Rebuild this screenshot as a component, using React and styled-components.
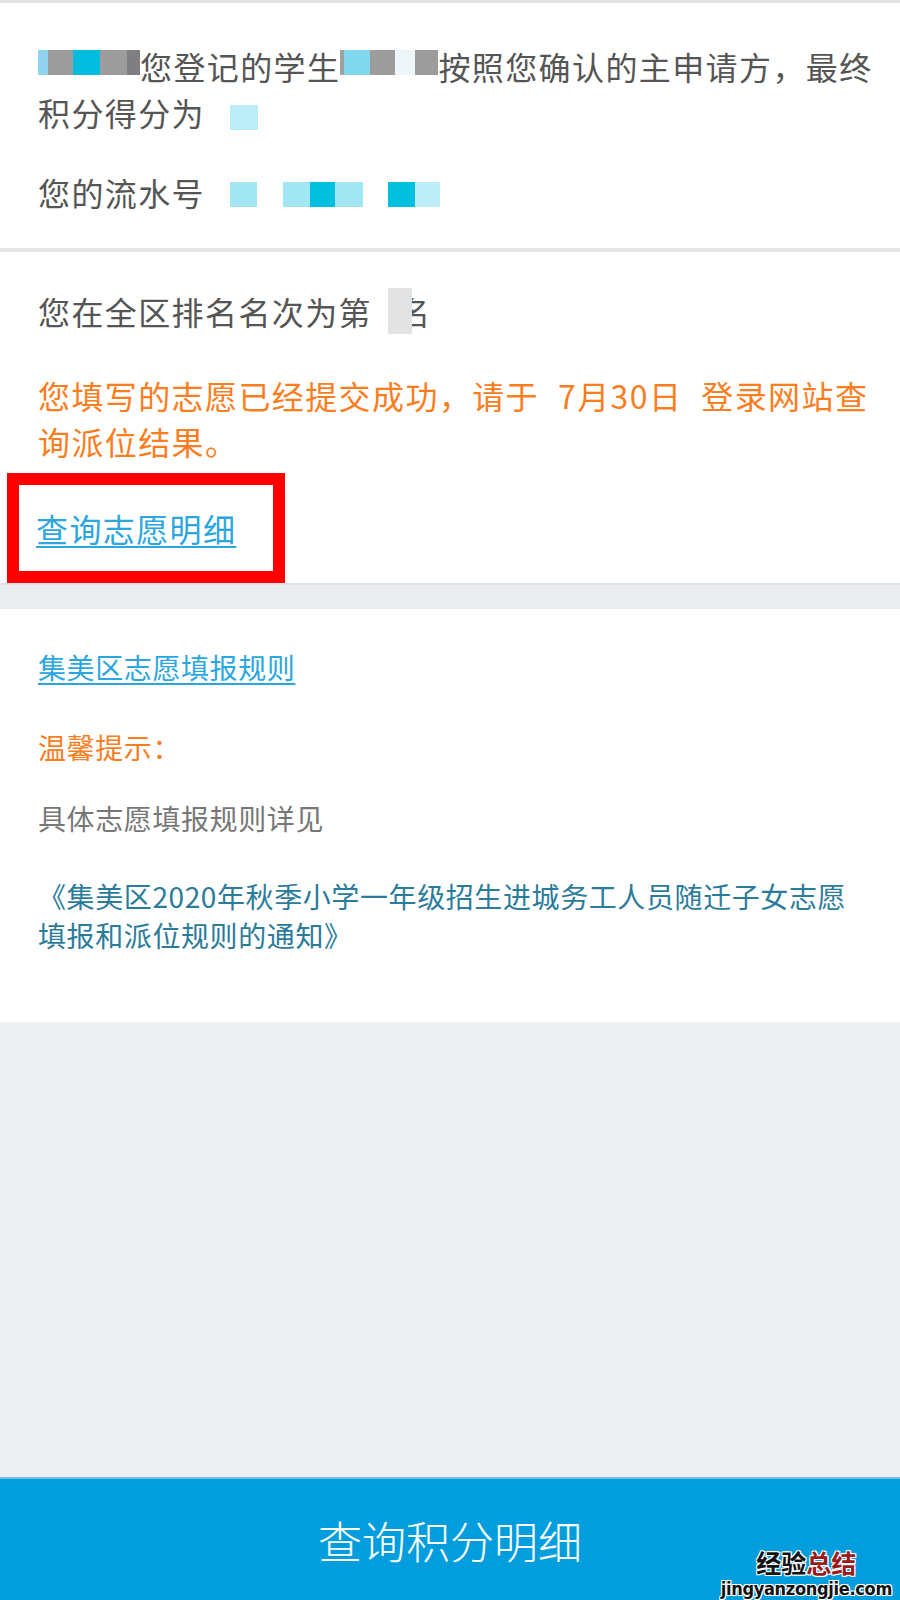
import React from 'react';
import styled, { createGlobalStyle } from 'styled-components';

const GlobalStyle = createGlobalStyle`
    html, body {
        margin : 0;
        padding : 0;
        background : #eeeff3;
        font-family : "Noto Sans CJK SC", "Liberation Sans", sans-serif;
    }
`;

const Page = styled.div`
    min-height : 100vh;
    display : flex;
    flex-direction : column;
    border-top : 3px solid #e2e2e2;
    box-sizing : border-box;
`;

const Section = styled.section`
    background : #ffffff;
    padding : ${(p) => p.$pad};
    border-bottom : ${(p) => (p.$divider ? '4px solid #e5e5e5' : 'none')};
`;

const Para = styled.p`
    margin : ${(p) => p.$mt || 0} 0 0 0;
    font-size : 32px;
    letter-spacing : 1.4px;
    line-height : 46px;
    color : ${(p) => p.$color || '#555555'};
`;

const SmallPara = styled.p`
    margin : ${(p) => p.$mt || 0} 0 0 0;
    font-size : 28px;
    letter-spacing : 0.6px;
    line-height : 39px;
    color : ${(p) => p.$color || '#777777'};
`;

const Tile = styled.span`
    display : inline-block;
    width : ${(p) => p.$w}px;
    height : ${(p) => p.$h || 25}px;
    background : ${(p) => p.$c || 'transparent'};
    vertical-align : ${(p) => p.$va || '5px'};
    letter-spacing : 0;
`;

const Cover = styled(Tile)`
    position : relative;
    z-index : 1;
`;

const Hidden = styled.span`
    margin-left : -14px;
`;

const DateSpan = styled.span`
    margin : 0 19px;
`;

const Mark = styled.div`
    margin : 9px 0 0 -31px;
    width : 237px;
    border : 12px solid #ff0000;
    padding : 20px 0 20px 17px;
`;

const Link = styled.a`
    color : ${(p) => p.$color || '#2ba6df'};
    text-decoration : underline;
    text-decoration-thickness : 2px;
    text-underline-offset : 4px;
    cursor : pointer;
`;

const Band = styled.div`
    height : 24px;
    background : #ebecee;
    border-top : 2px solid #e1e2e4;
`;

const Spacer = styled.div`
    flex : 1;
`;

const BottomBar = styled.button`
    position : relative;
    height : 123px;
    border : none;
    border-top : 2px solid #74bde2;
    background : #019ddd;
    color : #ffffff;
    font-family : "Noto Sans CJK SC", sans-serif;
    font-size : 44px;
    font-weight : 300;
    letter-spacing : 0;
    display : flex;
    align-items : center;
    justify-content : center;
    padding : 0;
    cursor : pointer;
`;

const Watermark = styled.div`
    position : absolute;
    right : 8px;
    bottom : 2px;
    display : flex;
    flex-direction : column;
    align-items : center;
    line-height : 1;
    text-shadow : -1px -1px 0 #fff, 1px -1px 0 #fff, -1px 1px 0 #fff, 1px 1px 0 #fff, 0 0 2px #fff;
`;

const WmTitle = styled.span`
    font-size : 25px;
    font-weight : 700;
    color : #111111;
    letter-spacing : 0;
`;

const WmRed = styled.span`
    color : #9b1b1b;
`;

const WmUrl = styled.span`
    margin-top : 5px;
    font-family : "Liberation Sans Narrow", "DejaVu Sans Condensed", "Liberation Sans", sans-serif;
    font-size : 18px;
    font-weight : 700;
    color : #111111;
    letter-spacing : -0.3px;
`;

const App = () => {
    return (
        <React.Fragment>
            <GlobalStyle />
            <Page>
                <Section $pad="40px 20px 33px 38px" $divider>
                    <Para>
                        <Tile $w={10} $c="#8fd3ee" />
                        <Tile $w={25} $c="#9c9c9c" />
                        <Tile $w={27} $c="#00bde0" />
                        <Tile $w={27} $c="#9c9c9c" />
                        <Tile $w={13} $c="#7f7f82" />
                        您登记的学生
                        <Tile $w={4} $c="#a0a0a0" />
                        <Tile $w={26} $c="#7fd8ee" />
                        <Tile $w={25} $c="#9c9c9c" />
                        <Tile $w={20} $c="#eef6fa" />
                        <Tile $w={23} $c="#9c9c9c" />
                        按照您确认的主申请方，最终积分得分为
                        <Tile $w={25} />
                        <Tile $w={28} $c="#bcecf6" $va="-4px" />
                    </Para>
                    <Para $mt="34px">
                        您的流水号
                        <Tile $w={25} $va="-1px" />
                        <Tile $w={27} $c="#a2e5f3" $va="-1px" />
                        <Tile $w={26} $va="-1px" />
                        <Tile $w={27} $c="#a2e5f3" $va="-1px" />
                        <Tile $w={25} $c="#00c0e0" $va="-1px" />
                        <Tile $w={28} $c="#a2e5f3" $va="-1px" />
                        <Tile $w={25} $va="-1px" />
                        <Tile $w={27} $c="#00c0e0" $va="-1px" />
                        <Tile $w={25} $c="#bdeef7" $va="-1px" />
                    </Para>
                </Section>

                <Section $pad="36px 20px 0 38px">
                    <Para>
                        您在全区排名名次为第
                        <Tile $w={16} />
                        <Cover $w={24} $h={46} $c="#e3e3e3" $va="-9px" />
                        <Hidden>名</Hidden>
                    </Para>
                    <Para $mt="38px" $color="#fa7d1e">
                        您填写的志愿已经提交成功，请于<DateSpan>7月30日</DateSpan>登录网站查询派位结果。
                    </Para>
                    <Mark>
                        <Para>
                            <Link>查询志愿明细</Link>
                        </Para>
                    </Mark>
                </Section>

                <Band />

                <Section $pad="39px 36px 67px 38px">
                    <SmallPara>
                        <Link>集美区志愿填报规则</Link>
                    </SmallPara>
                    <SmallPara $mt="41px" $color="#fa7d1e">温馨提示：</SmallPara>
                    <SmallPara $mt="32px">具体志愿填报规则详见</SmallPara>
                    <SmallPara $mt="39px" $color="#2b7b9b">
                        《集美区2020年秋季小学一年级招生进城务工人员随迁子女志愿填报和派位规则的通知》
                    </SmallPara>
                </Section>

                <Spacer />

                <BottomBar>
                    查询积分明细
                    <Watermark>
                        <WmTitle>
                            经验<WmRed>总结</WmRed>
                        </WmTitle>
                        <WmUrl>jingyanzongjie.com</WmUrl>
                    </Watermark>
                </BottomBar>
            </Page>
        </React.Fragment>
    );
};

export default App;
